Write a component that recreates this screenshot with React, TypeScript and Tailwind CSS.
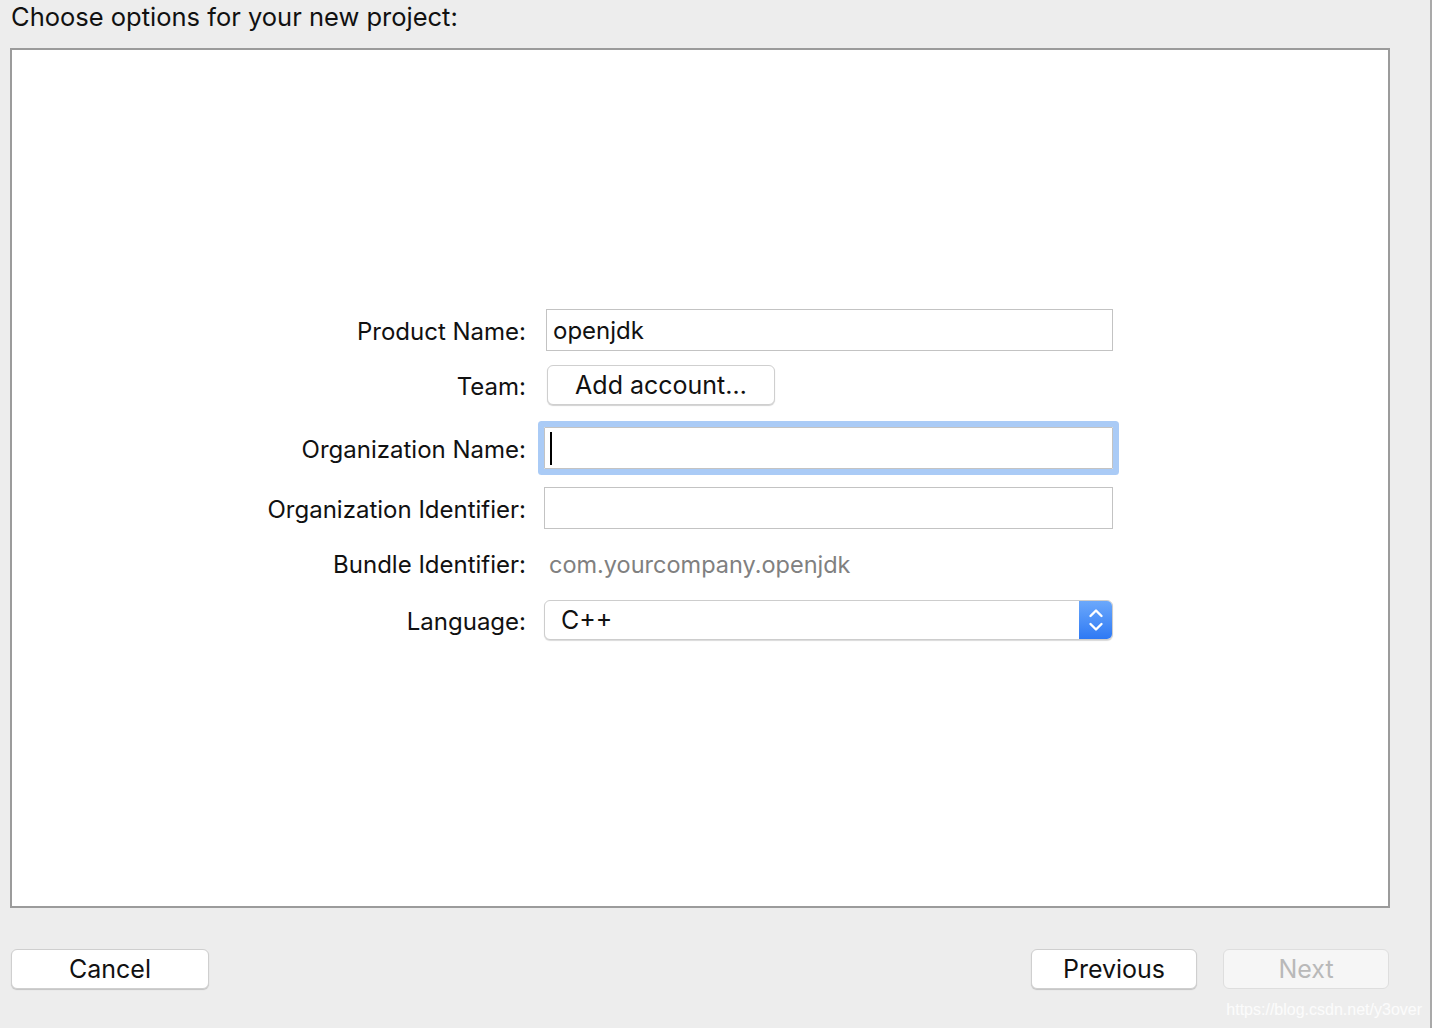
import React from "react";

const font = { fontFamily: "Inter, 'Liberation Sans', sans-serif" };

const Label = ({ children }: { children: React.ReactNode }) => (
  <div className="w-[514px] shrink-0 pt-[3px] text-right text-[24px] text-[#111]">{children}</div>
);

const Chevrons = () => (
  <svg width="18" height="30" viewBox="0 0 18 30" fill="none" stroke="white" strokeWidth="2.4" strokeLinecap="round" strokeLinejoin="round">
    <path d="M3.5 11 L9 5.5 L14.5 11" />
    <path d="M3.5 19 L9 24.5 L14.5 19" />
  </svg>
);

const App = () => {
  return (
    <div
      className="relative h-[1028px] w-[1432px] overflow-hidden border-r-2 border-[#a9a9a9] bg-[#ededed]"
      style={font}
    >
      <div className="h-[48px] pl-[11px] pt-[2px] text-[25.5px] leading-[30px] text-[#111]">
        Choose options for your new project:
      </div>

      <section className="ml-[10px] h-[860px] w-[1380px] border-2 border-[#9b9b9b] bg-white pt-[259px]">
        <div className="flex h-[42px] items-center">
          <Label>Product Name:</Label>
          <div className="ml-[20px] flex h-[42px] w-[567px] items-center border border-[#c3c3c3] pl-[6px] pt-[2px] text-[24px] text-[#111]">
            openjdk
          </div>
        </div>

        <div className="mt-[14px] flex h-[40px] items-center">
          <Label>Team:</Label>
          <button className="ml-[21px] h-[40px] w-[228px] rounded-[6px] border border-[#cfcfcf] bg-white pt-[1px] text-[25px] text-[#111] shadow-[0_1px_1px_rgba(0,0,0,0.18)]">
            Add account…
          </button>
        </div>

        <div className="mt-[22px] flex h-[42px] items-center">
          <Label>Organization Name:</Label>
          <div className="ml-[18px] flex h-[42px] w-[569px] items-center rounded-[1px] border border-[#c3c3c3] pl-[5px] shadow-[0_0_0_6px_#aacbf6]">
            <div className="h-[33px] w-[2px] bg-black" />
          </div>
        </div>

        <div className="mt-[18px] flex h-[42px] items-center">
          <Label>Organization Identifier:</Label>
          <div className="ml-[18px] h-[42px] w-[569px] border border-[#c3c3c3]" />
        </div>

        <div className="mt-[13px] flex h-[42px] items-center">
          <Label>Bundle Identifier:</Label>
          <div className="ml-[23px] pt-[3px] text-[23.5px] text-[#808080]">com.yourcompany.openjdk</div>
        </div>

        <div className="mt-[16px] flex h-[40px] items-center">
          <Label>Language:</Label>
          <div className="ml-[18px] flex h-[40px] w-[569px] overflow-hidden rounded-[6px] border border-[#cdcdcd] bg-white shadow-[0_1px_1px_rgba(0,0,0,0.15)]">
            <div className="flex flex-1 items-center pl-[16px] pt-[2px] text-[25px] text-[#111]">C++</div>
            <div className="flex w-[33px] items-center justify-center bg-gradient-to-b from-[#6ba8fb] to-[#2e79f4]">
              <Chevrons />
            </div>
          </div>
        </div>
      </section>

      <div className="mt-[41px] flex items-center pl-[11px] pr-[41px]">
        <button className="h-[40px] w-[198px] rounded-[6px] border border-[#cfcfcf] bg-white pt-[1px] text-[25px] text-[#111] shadow-[0_1px_1px_rgba(0,0,0,0.18)]">
          Cancel
        </button>
        <div className="flex-1" />
        <button className="h-[40px] w-[166px] rounded-[6px] border border-[#cfcfcf] bg-white pt-[1px] text-[25px] text-[#111] shadow-[0_1px_1px_rgba(0,0,0,0.18)]">
          Previous
        </button>
        <button className="ml-[26px] h-[40px] w-[166px] rounded-[6px] border border-[#dedede] bg-[#f6f6f6] pt-[1px] text-[25px] text-[#b9b9b9]">
          Next
        </button>
      </div>

      <div className="absolute right-[8px] top-[998px] text-[16px] text-white/80" style={{ fontFamily: "'Liberation Sans', sans-serif" }}>
        https://blog.csdn.net/y3over
      </div>
    </div>
  );
};

export default App;
